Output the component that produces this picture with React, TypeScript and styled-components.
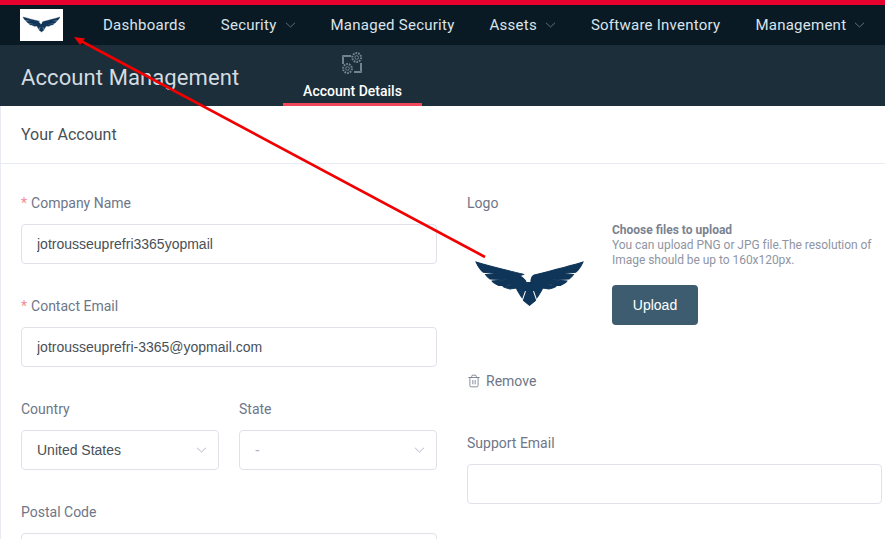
import styled, { createGlobalStyle } from "styled-components";
import { Trash2 } from "lucide-react";

const Global = createGlobalStyle`
    html, body {
        margin: 0;
        padding: 0;
        background: #fff;
        overflow: hidden;
    }
    * {
        box-sizing: border-box;
    }
`

const Page = styled.div`
    position: relative;
    width: 885px;
    height: 539px;
    overflow: hidden;
    font-family: Roboto, "Liberation Sans", sans-serif;
`

const TopBar = styled.header`
    height: 45px;
    border-top: 5px solid #e6002d;
    background: #0a1a24;
    display: flex;
    align-items: center;
    padding-left: 20px;
`

const LogoBox = styled.div`
    width: 43px;
    height: 32px;
    margin-right: 40px;
    background: #fff;
    display: flex;
    align-items: center;
    justify-content: center;
`

const Nav = styled.nav`
    display: flex;
    align-items: center;
    gap: 35px;
    white-space: nowrap;
`

const NavItem = styled.div`
    display: flex;
    align-items: center;
    gap: 8px;
    color: #d9e4ec;
    font-size: 15px;
    letter-spacing: 0.25px;
`

const SubHeader = styled.div`
    height: 61px;
    background: #1c2e3a;
    display: flex;
    padding-left: 21px;
`

const Title = styled.h1`
    width: 262px;
    margin: 20px 0 0;
    color: #d3dbe1;
    font-size: 22px;
    line-height: 26px;
    font-weight: 400;
    letter-spacing: 0.1px;
`

const Tab = styled.div`
    width: 139px;
    border-bottom: 3px solid #f0485a;
    display: flex;
    flex-direction: column;
    align-items: center;
    padding-top: 7px;
    color: #fff;
    font-size: 14px;
    line-height: 16px;
    font-weight: 500;
    gap: 8px;
`

const Card = styled.main`
    border-left: 1px solid #e8ebf3;
`

const CardTitle = styled.div`
    height: 58px;
    padding: 19px 0 0 20px;
    border-bottom: 1px solid #e8ebf3;
    color: #495057;
    font-size: 16px;
    line-height: 20px;
`

const Columns = styled.div`
    display: grid;
    grid-template-columns: 416px 415px;
    column-gap: 30px;
    padding: 29px 0 0 20px;
`

const Column = styled.div`
    display: flex;
    flex-direction: column;
`

const Field = styled.div`
    margin-bottom: 32px;
`

const Label = styled.label`
    display: block;
    height: 20px;
    margin-bottom: 11px;
    color: #6e7687;
    font-size: 14px;
    line-height: 20px;
`

const Star = styled.span`
    color: #f58a94;
    margin-right: 4px;
`

const Input = styled.input`
    display: block;
    width: 100%;
    height: 40px;
    padding: 0 15px;
    border: 1px solid #e0e2ea;
    border-radius: 4px;
    background: #fff;
    color: #495057;
    font-family: "Liberation Sans", Arial, sans-serif;
    font-size: 14px;
    outline: none;
`

const Pair = styled.div`
    display: grid;
    grid-template-columns: 198px 198px;
    column-gap: 20px;
`

const Select = styled.div<{ $muted?: boolean }>`
    height: 40px;
    padding: 0 11px 0 15px;
    border: 1px solid #e0e2ea;
    border-radius: 4px;
    display: flex;
    align-items: center;
    justify-content: space-between;
    color: ${(p) => (p.$muted ? "#a9afbb" : "#495057")};
    font-family: "Liberation Sans", Arial, sans-serif;
    font-size: 14px;
`

const LogoRow = styled.div`
    display: flex;
    height: 126px;
    margin-top: -1px;
`

const LogoPreview = styled.div`
    width: 145px;
    padding: 39px 0 0 9px;
    flex: none;
`

const UploadInfo = styled.div`
    display: flex;
    flex-direction: column;
    align-items: flex-start;
    color: #8f95a3;
    font-size: 12px;
    line-height: 15px;
`

const UploadTitle = styled.strong`
    font-weight: 700;
    color: #7b8290;
`

const UploadHint = styled.span`
    display: block;
    width: 265px;
    letter-spacing: -0.04px;
`

const UploadButton = styled.button`
    width: 86px;
    height: 40px;
    margin-top: 17px;
    border: 0;
    border-radius: 4px;
    background: #3e5c70;
    color: #fff;
    font-family: "Liberation Sans", Arial, sans-serif;
    font-size: 14px;
`

const Remove = styled.div`
    display: flex;
    align-items: center;
    gap: 5px;
    height: 20px;
    margin: 22px 0 42px;
    color: #6e7687;
    font-size: 14px;
`

const Arrow = styled.svg`
    position: absolute;
    left: 0;
    top: 0;
    pointer-events: none;
`

function Chevron({ color = "#5d6f7c" }: { color?: string }) {
    return (
        <svg width="11" height="6" viewBox="0 0 11 6" fill="none">
            <path d="M1 .8 5.5 5 10 .8" stroke={color} strokeWidth="1" />
        </svg>
    );
}

function Eagle({ width }: { width: number }) {
    return (
        <svg width={width} viewBox="18 35 320 132" fill="#0f3558" stroke="#0f3558" strokeWidth="3" style={{ display: "block", overflow: "visible" }}>
            <path d="M18 35C60 48 110 60 162 72L148 76C165 84 172 96 172 112L158 145C150 135 145 125 138 113L120 116C110 114 100 110 98 107L130 102 85 105C75 100 68 96 66 92L112 88 60 86C52 80 48 76 46 72L90 70 40 66C30 58 24 48 18 35Z" />
            <path d="M338 35C296 48 240 62 192 74 182 78 180 90 184 112L198 145C206 135 211 125 218 113L236 116C246 114 256 110 258 107L226 102 271 105C281 100 288 96 290 92L244 88 296 86C304 80 308 76 310 72L266 70 316 66C326 58 332 48 338 35Z" />
            <path d="M172 96 184 96 198 140 196 150 178 165 160 150 158 140Z" />
            <path d="M166 122 157 148M190 122 199 148" stroke="#fff" strokeWidth="3" fill="none" />
        </svg>
    );
}

function GearsIcon() {
    return (
        <svg width="23" height="23" viewBox="0 0 23 23" fill="none" stroke="#71858f" strokeWidth="1">
            <path d="M10 3.5H1.5V12M2.5 12V4.5H10M13 20.5H20.5V11M13 19.5H19.5V11" />
            <circle cx="15.7" cy="5.5" r="4.4" fill="#1c2e3a" stroke="#71858f" strokeDasharray="1.7 1" strokeWidth="2" />
            <circle cx="15.7" cy="5.5" r="1.8" />
            <circle cx="6.5" cy="16.5" r="4.4" fill="#1c2e3a" stroke="#71858f" strokeDasharray="1.7 1" strokeWidth="2" />
            <circle cx="6.5" cy="16.5" r="1.8" />
        </svg>
    );
}

function App() {
    return (
        <Page>
            <Global />
            <TopBar>
                <LogoBox><Eagle width={37} /></LogoBox>
                <Nav>
                    <NavItem>Dashboards</NavItem>
                    <NavItem>Security <Chevron /></NavItem>
                    <NavItem>Managed Security</NavItem>
                    <NavItem>Assets <Chevron /></NavItem>
                    <NavItem>Software Inventory</NavItem>
                    <NavItem>Management <Chevron /></NavItem>
                </Nav>
            </TopBar>
            <SubHeader>
                <Title>Account Management</Title>
                <Tab><GearsIcon />Account Details</Tab>
            </SubHeader>
            <Card>
                <CardTitle>Your Account</CardTitle>
                <Columns>
                    <Column>
                        <Field>
                            <Label><Star>*</Star>Company Name</Label>
                            <Input defaultValue="jotrousseuprefri3365yopmail" />
                        </Field>
                        <Field>
                            <Label><Star>*</Star>Contact Email</Label>
                            <Input defaultValue="jotrousseuprefri-3365@yopmail.com" />
                        </Field>
                        <Pair>
                            <Field>
                                <Label>Country</Label>
                                <Select>United States <Chevron color="#b4b9c4" /></Select>
                            </Field>
                            <Field>
                                <Label>State</Label>
                                <Select $muted>- <Chevron color="#b4b9c4" /></Select>
                            </Field>
                        </Pair>
                        <Field>
                            <Label>Postal Code</Label>
                            <Input />
                        </Field>
                    </Column>
                    <Column>
                        <Label>Logo</Label>
                        <LogoRow>
                            <LogoPreview><Eagle width={107} /></LogoPreview>
                            <UploadInfo>
                                <UploadTitle>Choose files to upload</UploadTitle>
                                <UploadHint>You can upload PNG or JPG file.The resolution of Image should be up to 160x120px.</UploadHint>
                                <UploadButton>Upload</UploadButton>
                            </UploadInfo>
                        </LogoRow>
                        <Remove><Trash2 size={14} strokeWidth={1.4} />Remove</Remove>
                        <Field>
                            <Label>Support Email</Label>
                            <Input />
                        </Field>
                    </Column>
                </Columns>
            </Card>
            <Arrow width="885" height="539" viewBox="0 0 885 539">
                <path d="M485 257 81 41" stroke="#f00000" strokeWidth="2.6" />
                <path d="M74 37 85 38.5 80 45Z" fill="#f00000" />
            </Arrow>
        </Page>
    );
}

export default App;
